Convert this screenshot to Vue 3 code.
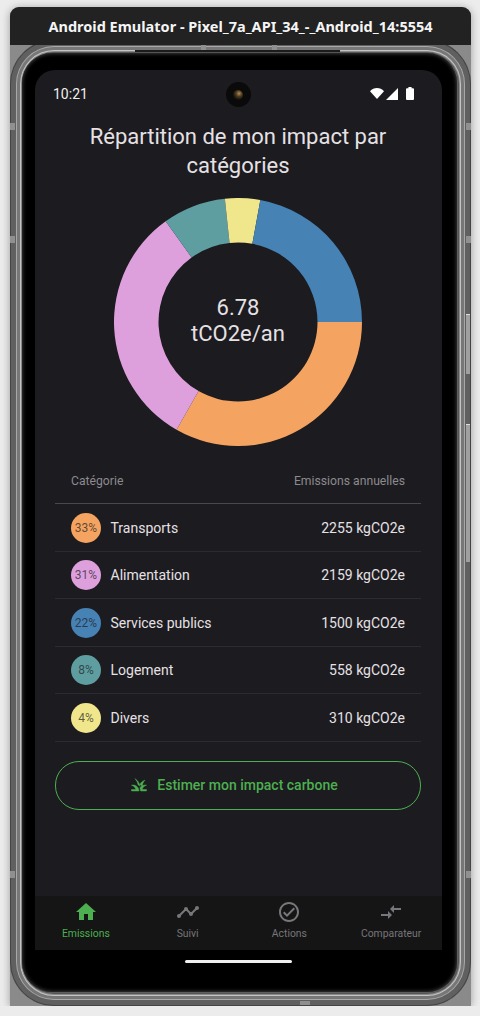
<template>
  <div class="window">
    <div class="titlebar">Android Emulator - Pixel_7a_API_34_-_Android_14:5554</div>
    <div class="device-area">
      <div class="frame">
        <span class="tick tick-a"></span>
        <span class="tick tick-b"></span>
        <span class="tick tick-c"></span>
        <span v-for="t in sideTicks" :key="t" class="side-tick" :style="{ top: t + 'px' }"></span>
        <span v-for="t in sideTicks" :key="'r' + t" class="side-tick right" :style="{ top: t + 'px' }"></span>
        <span class="side-btn volume"></span>
        <span class="side-btn power"></span>
        <span class="top-notch"></span>
        <div class="bezel">
          <div class="screen">
            <div class="statusbar">
              <span class="clock">10:21</span>
              <span class="camera"><span class="lens"></span></span>
              <div class="status-icons">
                <svg width="14" height="11" viewBox="0 0 14 11"><path d="M0 3.2C2 1.2 4.4 0 7 0s5 1.2 7 3.2L7 11z" fill="#fff" /></svg>
                <svg width="12" height="12" viewBox="0 0 12 12"><path d="M12 0v12H0z" fill="#fff" /></svg>
                <svg class="battery" width="8" height="13" viewBox="0 0 8 13"><path d="M2.4 0h3.2v1.2H7a1 1 0 0 1 1 1V12a1 1 0 0 1-1 1H1a1 1 0 0 1-1-1V2.200a1 1 0 0 1 1-1h1.400z" fill="#fff" /></svg>
              </div>
            </div>

            <div class="content">
              <h1 class="title">Répartition de mon impact par catégories</h1>

              <div class="chart">
                <svg width="248" height="248" viewBox="0 0 248 248">
                  <path v-for="s in slices" :key="s.name" :d="s.d" :fill="s.color" />
                </svg>
                <div class="chart-label">6.78<br />tCO2e/an</div>
              </div>

              <div class="table-head">
                <span>Catégorie</span>
                <span>Emissions annuelles</span>
              </div>
              <div class="row" v-for="item in rows" :key="item.name">
                <span class="pct" :style="{ background: item.color }">{{ item.pct }}%</span>
                <span class="name">{{ item.name }}</span>
                <span class="value">{{ item.value }} kgCO2e</span>
              </div>

              <div class="cta">
                <svg width="18" height="18" viewBox="0 0 24 24"><path d="M12 20H2v-2h5.750C7.020 15.190 4.810 12.990 2 12.260 2.640 12.100 3.310 12 4 12c4.420 0 8 3.580 8 8zm10-7.740c-.64-.16-1.310-.26-2-.26-2.930 0-5.480 1.580-6.880 3.930.29.66.53 1.350.67 2.070.13.650.21 1.320.21 2h8v-2h-5.750c.73-2.810 2.940-5.010 5.750-5.740zM6.500 3.500c3.900 2.200 6.300 5.700 6.800 10.300-.7-.9-1.700-1.700-2.700-2.300C10.200 8.500 8.700 5.700 6.500 3.500zm13.500 2c-2.100 2.100-3.400 4.700-3.800 7.800-.9-.7-2-1.200-3-1.600.9-3.100 3.500-5.300 6.800-6.200z" fill="#4caf50" stroke="#4caf50" stroke-width=".6" /></svg>
                <span>Estimer mon impact carbone</span>
              </div>
            </div>

            <nav class="tabs">
              <div v-for="tab in tabs" :key="tab.label" class="tab" :class="{ active: tab.active }">
                <svg width="24" height="24" viewBox="0 0 24 24"><path :d="tab.icon" fill="currentColor" /></svg>
                <span>{{ tab.label }}</span>
              </div>
            </nav>
          </div>
          <div class="gesture"><span></span></div>
        </div>
      </div>
    </div>
  </div>
</template>

<script setup>
// tableau dans l'ordre d'affichage
const rows = [
  { name: 'Transports', pct: 33, value: 2255, color: '#f4a460' },
  { name: 'Alimentation', pct: 31, value: 2159, color: '#dda0dd' },
  { name: 'Services publics', pct: 22, value: 1500, color: '#4682b4' },
  { name: 'Logement', pct: 8, value: 558, color: '#5f9ea0' },
  { name: 'Divers', pct: 4, value: 310, color: '#f0e68c' }
]

// le donut tourne dans un autre ordre que le tableau
const chartOrder = ['Transports', 'Alimentation', 'Logement', 'Divers', 'Services publics']
const total = rows.reduce((sum, r) => sum + r.value, 0)

const sideTicks = [83, 196, 831]

const point = (r, a) => {
  const x = 124 + r * Math.cos(a)
  const y = 124 + r * Math.sin(a)
  return `${x.toFixed(2)} ${y.toFixed(2)}`
}

let angle = 0
const slices = chartOrder.map((name) => {
  const row = rows.find((r) => r.name === name)
  const start = angle
  angle += (row.value / total) * Math.PI * 2
  const large = angle - start > Math.PI ? 1 : 0
  const d = `M${point(124, start)}A124 124 0 ${large} 1 ${point(124, angle)}L${point(79.5, angle)}A79.5 79.5 0 ${large} 0 ${point(79.5, start)}Z`
  return { name, color: row.color, d }
})

const tabs = [
  { label: 'Emissions', active: true, icon: 'M10 20v-6h4v6h5v-8h3L12 3 2 12h3v8z' },
  { label: 'Suivi', icon: 'M23 8c0 1.100-.9 2-2 2-.18 0-.35-.02-.51-.07l-3.560 3.550c.05.16.07.34.07.52 0 1.100-.9 2-2 2s-2-.9-2-2c0-.18.02-.36.07-.52l-2.550-2.550c-.16.05-.34.07-.52.07s-.36-.02-.52-.07l-4.550 4.560c.05.16.07.33.07.51 0 1.100-.9 2-2 2s-2-.9-2-2 .9-2 2-2c.18 0 .35.02.51.07l4.560-4.550C8.020 9.360 8 9.180 8 9c0-1.100.9-2 2-2s2 .9 2 2c0 .18-.02.36-.07.52l2.550 2.550c.16-.05.34-.07.52-.07s.36.02.52.07l3.550-3.560C19.020 8.350 19 8.180 19 8c0-1.100.9-2 2-2s2 .9 2 2z' },
  { label: 'Actions', icon: 'M12 2C6.480 2 2 6.480 2 12s4.480 10 10 10 10-4.480 10-10S17.520 2 12 2zm0 18c-4.410 0-8-3.590-8-8s3.590-8 8-8 8 3.590 8 8-3.590 8-8 8zm4.590-12.420L10 14.170l-2.590-2.580L6 13l4 4 8-8z' },
  { label: 'Comparateur', icon: 'M9.010 14H2v2h7.010v3L13 15l-3.990-4v3zm5.980-1v-3H22V8h-7.010V5L11 9l3.990 4z' }
]
</script>

<style>
html,
body {
  margin: 0;
  background: #ececec;
}
</style>

<style scoped>
.window {
  box-sizing: border-box;
  width: 461px;
  height: 999px;
  margin: 7px 0 0 10px;
  display: flex;
  flex-direction: column;
  background: #8a8a8a;
  border-radius: 9px 9px 0 0;
  box-shadow: 0 1px 8px rgba(0, 0, 0, 0.35);
  overflow: hidden;
}

.titlebar {
  position: relative;
  z-index: 1;
  height: 38px;
  flex: none;
  background: #222222;
  color: #f5f5f5;
  font: 700 14.500px/38px "Noto Sans", sans-serif;
  text-align: center;
  white-space: nowrap;
}

.device-area {
  flex: 1;
  min-height: 0;
  display: flex;
}

/* les anneaux du boitier sont des ombres internes empilees */
.frame {
  position: relative;
  flex: 1;
  margin-top: -5px;
  box-sizing: border-box;
  padding: 13px 14px 14px 12px;
  border-radius: 44px;
  background: #5e5e5e;
  box-shadow: inset 0 0 0 1px #454545, inset 0 0 0 6px #606060, inset 0 0 0 7px #a8a8a8, inset 0 0 0 10px #777, inset 0 0 0 11px #c4c4c4, inset 0 0 0 12px #888, inset 0 0 0 13px #555;
}

.tick {
  position: absolute;
  background: #909090;
  height: 7px;
  width: 5px;
}
.tick-a { left: 191px; top: 5px; }
.tick-b { left: 262px; top: 5px; }
.tick-c { left: 290px; bottom: 1px; height: 4px; width: 10px; }

.side-tick {
  position: absolute;
  left: 0;
  width: 5px;
  height: 7px;
  background: #909090;
}

.side-tick.right {
  left: auto;
  right: 0;
}

.side-btn {
  position: absolute;
  right: 1px;
  width: 4px;
  background: #a0a0a0;
  border-top: 1px solid #ddd;
}

.volume {
  top: 274px;
  height: 59px;
}

.power {
  top: 384px;
  height: 137px;
}

.top-notch {
  position: absolute;
  left: 125px;
  top: 10px;
  width: 205px;
  height: 2px;
  background: #1c1c1c;
}

.bezel {
  height: 100%;
  box-sizing: border-box;
  padding: 17px 15px 0 13px;
  background: #000;
  border-radius: 30px;
  box-shadow: inset 0 0 4px #555;
  display: flex;
  flex-direction: column;
}

.screen {
  height: 880px;
  flex: none;
  display: flex;
  flex-direction: column;
  background: #1c1b1f;
  border-radius: 20px 20px 0 0;
  color: #e6e1e5;
  font-family: Roboto, sans-serif;
  overflow: hidden;
}

.statusbar {
  position: relative;
  height: 48px;
  flex: none;
  display: flex;
  align-items: center;
  justify-content: space-between;
  padding: 0 28px 0 18px;
}

.clock {
  font-size: 14px;
  color: #f0f0f0;
}

.camera {
  position: absolute;
  left: 190.500px;
  top: 12px;
  width: 25px;
  height: 25px;
  border-radius: 50%;
  background: #0a0a0a;
  display: flex;
  align-items: center;
  justify-content: center;
}

.lens {
  width: 10px;
  height: 10px;
  border-radius: 50%;
  background: radial-gradient(circle at 60% 35%, #b78a5e 0, #4a3a1c 35%, #111 70%);
}

.status-icons {
  display: flex;
  align-items: center;
  gap: 2px;
  margin-top: -1px;
}

.battery {
  margin-left: 6px;
}

.content {
  flex: 1;
  min-height: 0;
  padding: 4px 21px 0 20px;
}

.title {
  margin: 0;
  padding: 0 30px;
  font-size: 22px;
  font-weight: 400;
  line-height: 29px;
  text-align: center;
}

.chart {
  position: relative;
  width: 248px;
  height: 248px;
  margin: 18px auto 0;
}

.chart svg {
  display: block;
}

.chart-label {
  position: absolute;
  inset: 0;
  text-align: center;
  font-size: 22px;
  line-height: 26px;
  padding-top: 97px;
  box-sizing: border-box;
}

.table-head {
  display: flex;
  justify-content: space-between;
  padding: 0 16px;
  height: 35px;
  box-sizing: border-box;
  margin-top: 23px;
  line-height: 24px;
  font-size: 12.200px;
  color: #8b8a8e;
  border-bottom: 1px solid #49484c;
}

.row {
  height: 47.500px;
  box-sizing: border-box;
  display: flex;
  align-items: center;
  padding: 1px 16px 0;
  border-bottom: 1px solid #2c2b2f;
  font-size: 14px;
}

.pct {
  width: 30px;
  height: 30px;
  border-radius: 50%;
  display: flex;
  align-items: center;
  justify-content: center;
  font-size: 12px;
  color: rgba(28, 27, 31, 0.7);
  flex: none;
}

.name {
  margin-left: 9.500px;
  flex: 1;
}

.cta {
  margin-top: 19px;
  height: 49px;
  box-sizing: border-box;
  border: 1px solid #4caf50;
  border-radius: 24px;
  padding-right: 8px;
  display: flex;
  align-items: center;
  justify-content: center;
  gap: 9px;
  color: #4caf50;
  font-size: 14px;
  font-weight: 500;
}

.tabs {
  height: 54px;
  flex: none;
  display: flex;
  background: #151515;
}

.tab {
  flex: 1;
  display: flex;
  flex-direction: column;
  align-items: center;
  padding-top: 4px;
  color: #77767a;
  font-size: 10.400px;
  line-height: 14px;
}

.tab svg {
  display: block;
  margin-bottom: 3px;
}

.tab.active {
  color: #4caf50;
}

.gesture {
  flex: 1;
  position: relative;
}

.gesture span {
  position: absolute;
  left: 150px;
  top: 10px;
  width: 107px;
  height: 3px;
  border-radius: 2px;
  background: #f0f0f0;
}
</style>
